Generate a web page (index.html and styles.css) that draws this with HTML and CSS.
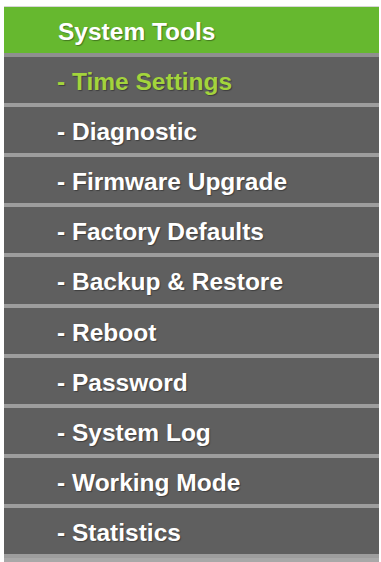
FILE: index.html
```html
<!DOCTYPE html>
<html>
<head>
<meta charset="utf-8">
<link rel="stylesheet" href="styles.css">
</head>
<body>
<nav class="menu">
  <div class="item header">System Tools</div>
  <div class="item active">- Time Settings</div>
  <div class="item">- Diagnostic</div>
  <div class="item">- Firmware Upgrade</div>
  <div class="item">- Factory Defaults</div>
  <div class="item">- Backup &amp; Restore</div>
  <div class="item">- Reboot</div>
  <div class="item">- Password</div>
  <div class="item">- System Log</div>
  <div class="item">- Working Mode</div>
  <div class="item">- Statistics</div>
  <div class="tail"></div>
</nav>
</body>
</html>
```

FILE: styles.css
```css
html, body {
  margin: 0;
  padding: 0;
  background: #ffffff;
}

.menu {
  margin: 6px 2px 0 4px;
  display: flex;
  flex-direction: column;
  border-top: 1px solid #d6d6d6;
  font-family: "Liberation Sans", Arial, sans-serif;
  font-weight: bold;
  font-size: 24.5px;
  color: #ffffff;
}

.item {
  height: 46.1px;
  padding: 0 0 0 53px;
  line-height: 50px;
  background: #5f5f5f;
  border-bottom: 4px solid #9d9d9d;
  text-shadow: 1px 1px 1px rgba(0, 0, 0, 0.35);
  white-space: nowrap;
  overflow: hidden;
}

.item.header {
  background: #66b82f;
  padding-left: 54px;
  border-bottom-color: #8f8f8f;
}

.item.active {
  color: #a3d43c;
}

.tail {
  height: 10px;
  background: #a8a8a8;
}
```
